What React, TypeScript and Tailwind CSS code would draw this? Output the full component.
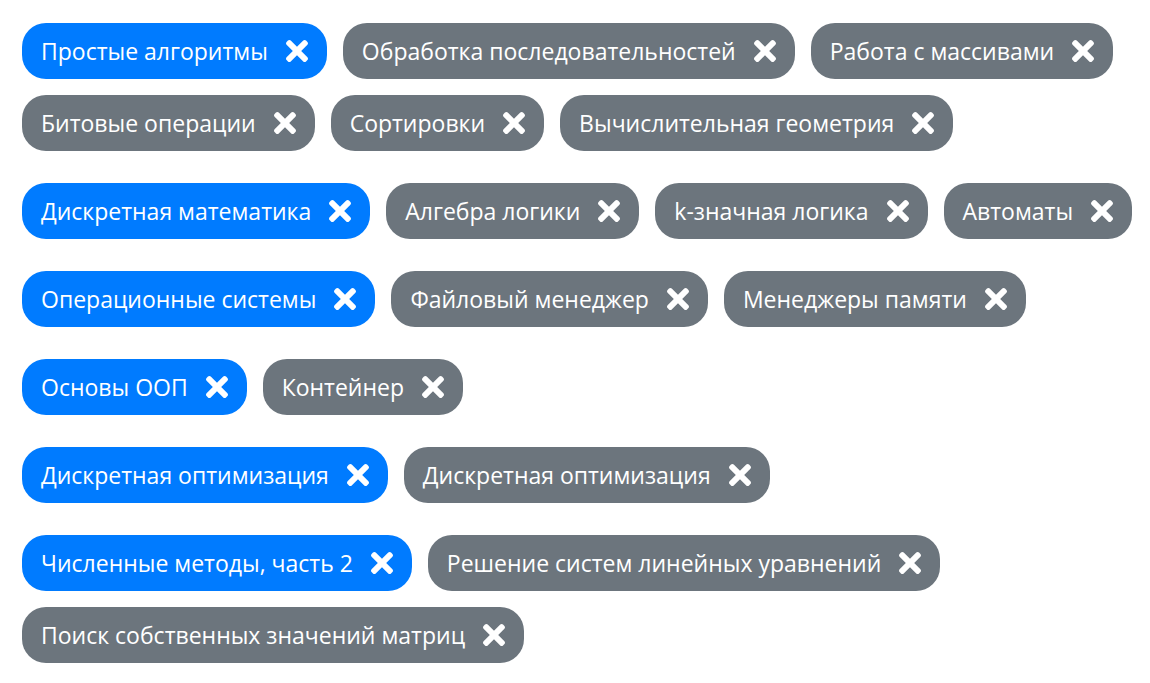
import { FaTimes } from "react-icons/fa"

type Tag = { label: string; primary?: boolean }

const groups: Tag[][] = [
  [
    { label: "Простые алгоритмы", primary: true },
    { label: "Обработка последовательностей" },
    { label: "Работа с массивами" },
    { label: "Битовые операции" },
    { label: "Сортировки" },
    { label: "Вычислительная геометрия" },
  ],
  [
    { label: "Дискретная математика", primary: true },
    { label: "Алгебра логики" },
    { label: "k-значная логика" },
    { label: "Автоматы" },
  ],
  [
    { label: "Операционные системы", primary: true },
    { label: "Файловый менеджер" },
    { label: "Менеджеры памяти" },
  ],
  [{ label: "Основы ООП", primary: true }, { label: "Контейнер" }],
  [{ label: "Дискретная оптимизация", primary: true }, { label: "Дискретная оптимизация" }],
  [
    { label: "Численные методы, часть 2", primary: true },
    { label: "Решение систем линейных уравнений" },
    { label: "Поиск собственных значений матриц" },
  ],
]

const Chip = ({ tag }: { tag: Tag }) => (
  <span
    className={
      tag.primary
        ? "flex h-14 items-center gap-[18px] rounded-3xl bg-[#007bff] px-[19px] text-white"
        : "flex h-14 items-center gap-[18px] rounded-3xl bg-[#6c757d] px-[19px] text-white"
    }
  >
    <span className="whitespace-nowrap">{tag.label}</span>
    <FaTimes className="h-8 w-[22px] shrink-0" />
  </span>
)

export default function App() {
  return (
    <div
      className="flex flex-col gap-8 pb-5 pl-[22px] pt-[23px] text-[23px] leading-none"
      style={{ fontFamily: '"Open Sans", "Noto Sans", sans-serif' }}
    >
      {groups.map((g, i) => (
        <div key={i} className="flex flex-wrap gap-4">
          {g.map((t, j) => (
            <Chip key={j} tag={t} />
          ))}
        </div>
      ))}
    </div>
  )
}
